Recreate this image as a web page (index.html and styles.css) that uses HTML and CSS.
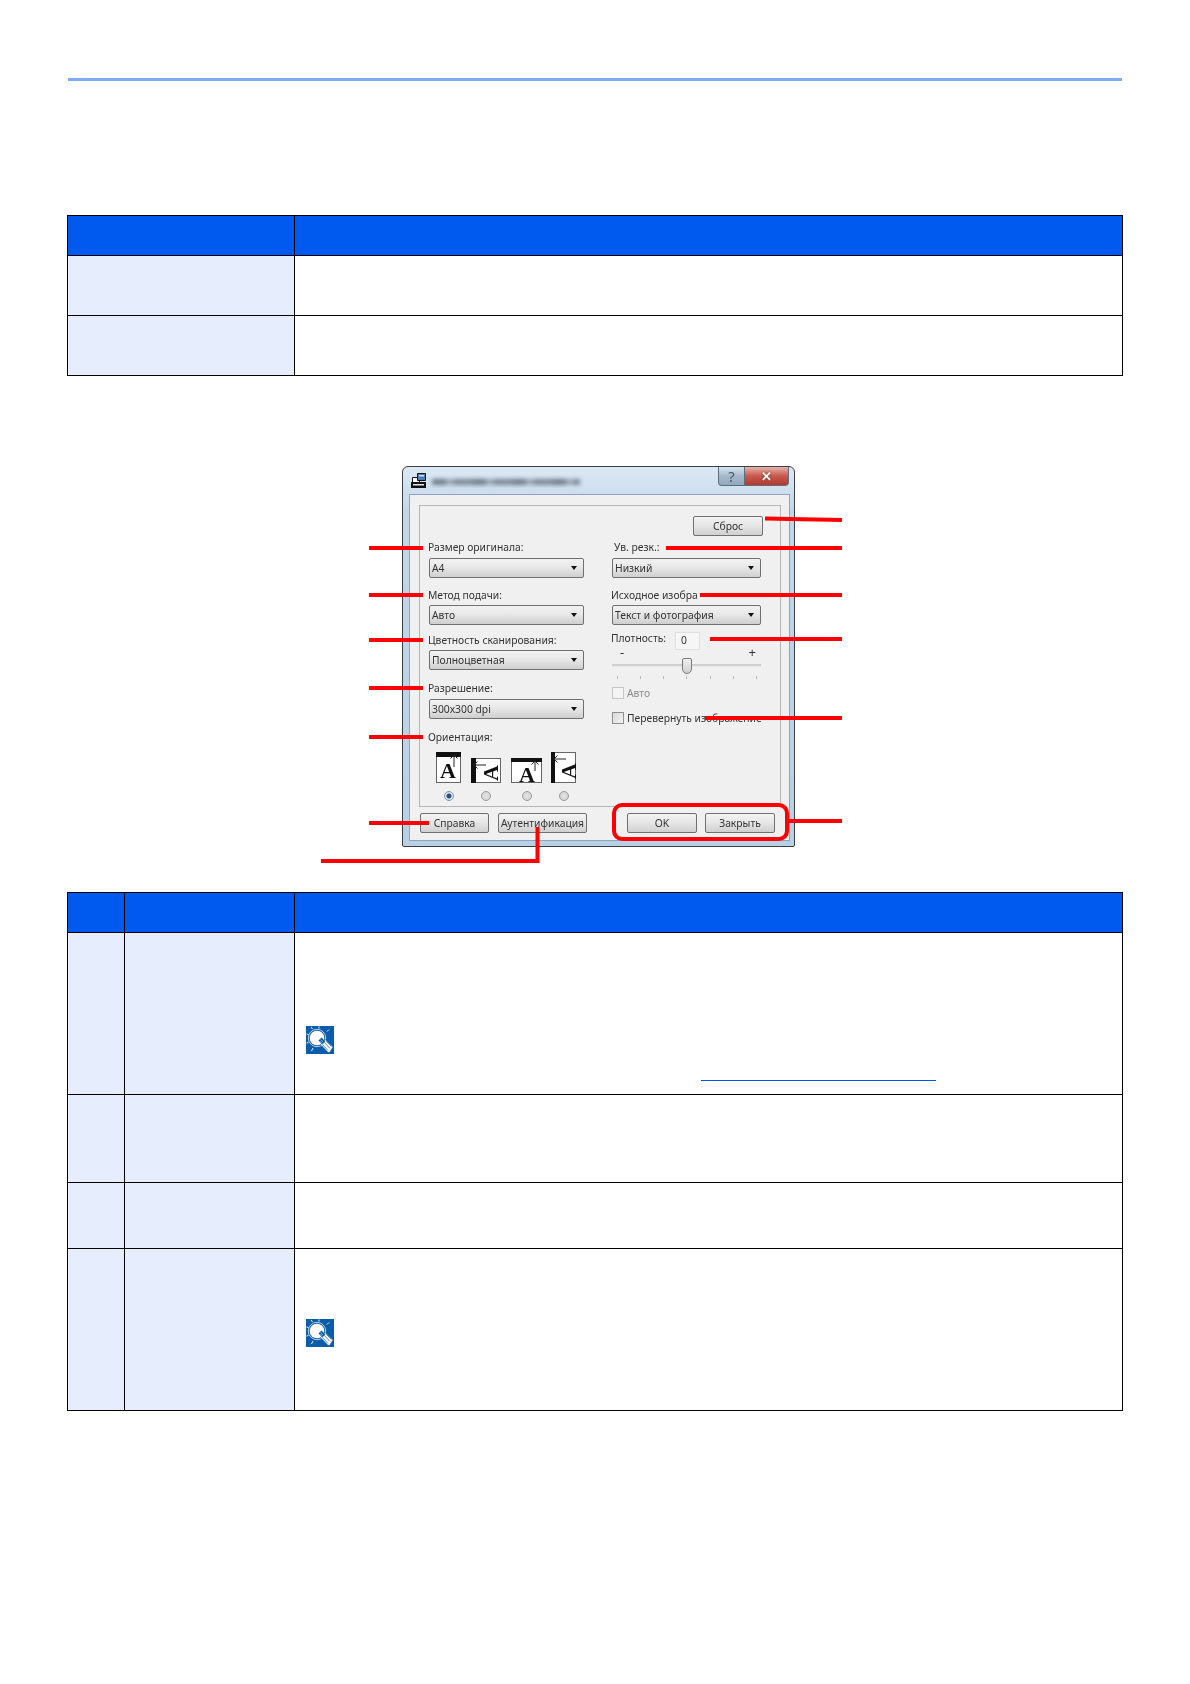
FILE: index.html
```html
<!DOCTYPE html>
<html lang="ru">
<head>
<meta charset="utf-8">
<title>Настройки сканирования</title>
<link rel="stylesheet" href="styles.css">
</head>
<body>
<div class="page">
  <div class="rule"></div>

  <table class="tbl tbl-a">
    <colgroup><col class="c-name"><col></colgroup>
    <tr class="r40"><th></th><th></th></tr>
    <tr class="r60"><td class="lab"></td><td></td></tr>
    <tr class="r60"><td class="lab"></td><td></td></tr>
  </table>

  <div class="figure">
    <div class="dialog">
      <div class="titlebar">
        <svg class="appicon" viewBox="0 0 15 15" width="15" height="15">
          <rect x="0" y="9" width="15" height="6" fill="#111"/>
          <rect x="2" y="11" width="11" height="1.500" fill="#e8e8e8"/>
          <path d="M1.500 4.500h7v5h-7z" fill="#fff" stroke="#111"/>
          <path d="M6.500.5h8v7h-8z" fill="#4a7fb5" stroke="#111"/>
          <path d="M8 2h5v1.500H8z" fill="#cfe2f3"/>
        </svg>
        <div class="blurtitle"></div>
        <div class="winbtns">
          <div class="winbtn help">?</div>
          <div class="winbtn close">✕</div>
        </div>
      </div>
      <div class="panel">
        <div class="group">
          <div class="resetrow"><div class="btn reset">Сброс</div></div>
          <div class="cols">
            <div class="col left">
              <div class="field"><div class="lbl">Размер оригинала:</div><div class="sel">A4</div></div>
              <div class="field"><div class="lbl">Метод подачи:</div><div class="sel">Авто</div></div>
              <div class="field"><div class="lbl">Цветность сканирования:</div><div class="sel">Полноцветная</div></div>
              <div class="field"><div class="lbl">Разрешение:</div><div class="sel">300x300 dpi</div></div>
              <div class="field"><div class="lbl">Ориентация:</div></div>
              <div class="orient">
                <svg class="o1" width="25" height="31" viewBox="0 0 25 31">
                  <rect x=".5" y=".5" width="24" height="30" fill="#fff" stroke="#666"/>
                  <rect width="25" height="5" fill="#111"/>
                  <text x="12" y="26" text-anchor="middle" class="glyph">A</text>
                  <path d="M18 15V3M14.500 6.500 18 3l3.500 3.500" fill="none" stroke="#222" stroke-width="1"/>
                </svg>
                <svg class="o2" width="30" height="25" viewBox="0 0 30 25">
                  <rect x=".5" y=".5" width="29" height="24" fill="#fff" stroke="#666"/>
                  <rect width="5" height="25" fill="#111"/>
                  <text x="0" y="0" text-anchor="middle" class="glyph" transform="translate(27 15) rotate(-90)">A</text>
                  <path d="M15 7H3M6.500 3.500 3 7l3.500 3.500" fill="none" stroke="#222" stroke-width="1"/>
                </svg>
                <svg class="o3" width="31" height="25" viewBox="0 0 31 25">
                  <rect x=".5" y=".5" width="30" height="24" fill="#fff" stroke="#666"/>
                  <rect width="31" height="4" fill="#111"/>
                  <text x="16" y="24" text-anchor="middle" class="glyph">A</text>
                  <path d="M24 13V3M20.500 6.500 24 3l3.500 3.500" fill="none" stroke="#222" stroke-width="1"/>
                </svg>
                <svg class="o4" width="25" height="31" viewBox="0 0 25 31">
                  <rect x=".5" y=".5" width="24" height="30" fill="#fff" stroke="#666"/>
                  <rect width="4" height="31" fill="#111"/>
                  <text x="0" y="0" text-anchor="middle" class="glyph" transform="translate(25 19) rotate(-90)">A</text>
                  <path d="M15 7H3M6.500 3.500 3 7l3.500 3.500" fill="none" stroke="#222" stroke-width="1"/>
                </svg>
              </div>
              <div class="radios">
                <span class="radio on"></span><span class="radio"></span><span class="radio"></span><span class="radio"></span>
              </div>
            </div>
            <div class="col right">
              <div class="field"><div class="lbl">Ув. резк.:</div><div class="sel">Низкий</div></div>
              <div class="field"><div class="lbl">Исходное изобра</div><div class="sel">Текст и фотография</div></div>
              <div class="density">
                <div class="lbl">Плотность:</div>
                <div class="numbox">0</div>
              </div>
              <div class="signs"><span>-</span><span>+</span></div>
              <div class="slider"><div class="thumb"></div></div>
              <div class="ticks"><i></i><i></i><i></i><i></i><i></i><i></i><i></i></div>
              <div class="check dis"><span class="box"></span>Авто</div>
              <div class="check"><span class="box"></span>Перевернуть изображение</div>
            </div>
          </div>
        </div>
        <div class="footer">
          <div class="btn help-b">Справка</div>
          <div class="btn auth">Аутентификация</div>
          <div class="btn ok">OK</div>
          <div class="btn closeb">Закрыть</div>
        </div>
      </div>
    </div>
  </div>

  <table class="tbl tbl-b">
    <colgroup><col class="c-no"><col class="c-item"><col></colgroup>
    <tr class="r40"><th></th><th></th><th></th></tr>
    <tr class="r162">
      <td class="lab"></td><td class="lab"></td>
      <td class="notecell">
        <svg class="tip" viewBox="0 0 28 28" width="28" height="28"><use href="#bulb"/></svg>
        <div class="linkline"></div>
      </td>
    </tr>
    <tr class="r88"><td class="lab"></td><td class="lab"></td><td></td></tr>
    <tr class="r66"><td class="lab"></td><td class="lab"></td><td></td></tr>
    <tr class="r162">
      <td class="lab"></td><td class="lab"></td>
      <td class="notecell note-high">
        <svg class="tip" viewBox="0 0 28 28" width="28" height="28"><use href="#bulb"/></svg>
      </td>
    </tr>
  </table>

  <svg class="defs" width="0" height="0">
    <symbol id="bulb" viewBox="0 0 28 28">
      <rect width="28" height="28" fill="#0b5dab"/>
      <circle cx="11" cy="12" r="8.700" fill="none" stroke="#e6eff8" stroke-width=".8"/>
      <circle cx="11" cy="12" r="7.300" fill="#fff"/>
      <path d="M14.500 18.500l4.500-5 8 7.500-3.500 5.500-1.500-.2z" fill="#fff" stroke="#0b5dab" stroke-width=".5"/>
      <path d="M16.500 18.500l5.500 6M18.500 16.500l5.500 6M20.500 15.500l5 5" stroke="#0b5dab" stroke-width=".7"/>
      <path d="M12.500 14.500l3-3 3.800 4-3 3z" fill="#0b5dab"/>
      <path d="M14.500 13.500l2.500 2.500M13.700 15l2.500 2.500" stroke="#a9c8e6" stroke-width=".7"/>
      <path d="M5 1l1.500 2M13 0.500v2M23 3.500l-2 2M0.500 8l2 .5M0.500 17l2-.5M5.500 25l1.500-3" stroke="#fff" stroke-width=".9"/>
    </symbol>
  </svg>

  <svg class="marks" width="1190" height="1684" viewBox="0 0 1190 1684">
    <g fill="none" stroke="#f00" stroke-width="4">
      <path d="M369 548H423M369 595H423M369 640H423M369 688H423M369 737H423M369 823H429"/>
      <path d="M321 861H537.500V827"/>
      <path d="M765 518.500L842 520M666 548H842M700 595H842M710 639H842M705 718H842M789 821H842"/>
      <rect x="614" y="805" width="173" height="34" rx="8"/>
    </g>
  </svg>
</div>
</body>
</html>
```
FILE: styles.css
```css
* { box-sizing: border-box; }
html, body { margin: 0; padding: 0; background: #fff; }
body { font-family: "Noto Sans", "Liberation Sans", sans-serif; color: #222; }

.page { position: relative; width: 1190px; height: 1684px; padding: 78px 67px 0; overflow: hidden; }
.rule { height: 3px; margin: 0 1px 134px; background: #7fabf5; }

.tbl { width: 1056px; border-collapse: collapse; table-layout: fixed; }
.tbl th, .tbl td { border: 1px solid #000; padding: 0; }
.tbl th { background: #005af0; }
.lab { background: #e6edfc; }
.c-name { width: 227px; }
.c-no { width: 57px; }
.c-item { width: 170px; }
.r40 { height: 40px; }
.r60 { height: 60px; }
.r162 { height: 162px; }
.r88 { height: 88px; }
.r66 { height: 66px; }

.tbl .notecell { vertical-align: top; padding: 93px 0 0 11px; }
.tbl .note-high { padding-top: 70px; }
.tip { display: block; }
.linkline { height: 1px; width: 235px; margin: 26px 0 0 395px; background: #0055f0; }

.figure { height: 516px; padding: 90px 0 0 335px; }

.dialog {
  width: 393px; height: 381px;
  padding: 0 4px 6px 6px;
  border: 1px solid #3a3f44;
  border-radius: 6px 6px 2px 2px;
  background: linear-gradient(#dce9f4, #c1d7e9 12%, #b8d0e6);
  font-size: 10.300px;
  color: #333;
  filter: blur(.3px);
}
.titlebar { display: flex; height: 27px; align-items: flex-start; }
.appicon { margin: 6px 0 0 2px; flex: none; }
.blurtitle {
  width: 148px; height: 6px; margin: 12px 0 0 6px;
  background: repeating-linear-gradient(90deg, #6f7c89 0 14px, #98a5b2 14px 22px, #7c8996 22px 40px);
  filter: blur(2px);
}
.winbtns { display: flex; margin: 0 1px 0 auto; }
.winbtn {
  height: 19px; display: flex; align-items: center; justify-content: center;
  border: 1px solid #5f6d7c; border-top: 0;
  font-weight: bold;
}
.winbtn.help {
  width: 27px; border-radius: 0 0 0 4px;
  background: linear-gradient(#d9e6f1, #a5b9cb 50%, #92a8bc);
  color: #4a5866; font-size: 15px; font-weight: normal;
}
.winbtn.close {
  width: 44px; border-left: 0; border-radius: 0 0 4px 0;
  background: linear-gradient(#e6b4ac, #c9594e 50%, #b23a2f);
  color: #fff; font-size: 13px; text-shadow: 0 0 2px #5a1a14;
}

.panel { height: 347px; padding: 10px 8px 0 9px; background: #f0f0f0; border: 1px solid #8ea6bd; }
.group { height: 302px; border: 1px solid #b6b6b6; }
.resetrow { display: flex; justify-content: flex-end; padding: 10px 17px 0 0; }
.btn {
  height: 20px; display: flex; align-items: center; justify-content: center; padding-bottom: 1px;
  border: 1px solid #707070; border-radius: 2px;
  background: linear-gradient(#f3f3f3, #e6e6e6 48%, #d0d0d0);
  font-size: 10.300px; color: #333;
}
.reset { width: 70px; }

.cols { display: flex; padding-top: 4px; }
.col.left { width: 155px; margin: 0 28px 0 9px; }
.col.right { width: 149px; }

.lbl { height: 14px; line-height: 14px; margin-left: -1px; white-space: nowrap; }
.field + .field { margin-top: 10px; }
.field .lbl + .sel { margin-top: 4px; }
.field:nth-child(2) .sel, .field:nth-child(3) .sel { margin-top: 3px; }
.field:nth-child(3) { margin-top: 8px; }
.field:nth-child(n+4) { margin-top: 11px; }
.right .lbl { margin-left: 2px; }
.right .field:nth-child(2) .lbl { margin-left: -1px; }

.sel {
  position: relative; height: 20px; line-height: 18px; padding-left: 2px;
  border: 1px solid #707070; border-radius: 2px;
  background: linear-gradient(#f2f2f2, #e8e8e8 45%, #cfcfcf);
  white-space: nowrap;
}
.sel::after {
  content: ""; position: absolute; right: 6px; top: 7px;
  border: 3px solid transparent; border-top: 4px solid #111; border-bottom: 0;
}

.orient { display: flex; align-items: flex-end; height: 31px; margin-top: 8px; padding-left: 7px; }
.orient svg { flex: none; overflow: visible; }
.o2 { margin-left: 10px; }
.o3 { margin-left: 10px; }
.o4 { margin-left: 9px; }
.glyph { font-family: "Liberation Serif", serif; font-weight: bold; font-size: 22px; fill: #111; }

.radios { display: flex; margin-top: 8px; padding-left: 15px; }
.radio {
  flex: none; width: 10px; height: 10px; margin-right: 27px; border-radius: 50%;
  border: 1px solid #9a9a9a;
  background: radial-gradient(#e4e4e4, #cfcfcf);
}
.radio:nth-child(2) { margin-right: 31px; }
.radio.on {
  border-color: #7f95ad;
  background: radial-gradient(#2b4f78 0 2px, #dfe8f1 3px);
}

.density { display: flex; margin-top: 7px; height: 18px; }
.density .lbl { width: 64px; margin-left: -1px; margin-top: -1px; }
.numbox { width: 25px; height: 18px; padding: 0 0 0 5px; line-height: 14px; background: #f6f6f6; border: 1px solid #e0e0e0; }
.signs { display: flex; justify-content: space-between; height: 10px; line-height: 10px; padding: 0 5px 0 8px; font-size: 13px; margin-top: -3px; }
.slider { position: relative; height: 2px; margin-top: 7px; background: #cfcfcf; border-bottom: 1px solid #e9e9e9; box-sizing: content-box; }
.thumb {
  position: absolute; left: 70px; top: -6px; width: 10px; height: 16px;
  border: 1px solid #7a7a7a; border-radius: 2px 2px 5px 5px;
  background: linear-gradient(#f0f0f0, #cfcfcf);
}
.ticks { display: flex; justify-content: space-between; height: 3px; margin-top: 9px; padding: 0 4px 0 5px; }
.ticks i { display: block; width: 1px; height: 3px; background: #bbb; }

.check { display: flex; align-items: center; height: 12px; margin-top: 8px; white-space: nowrap; }
.check + .check { margin-top: 13px; }
.check .box { flex: none; width: 12px; height: 12px; margin-right: 3px; border: 1px solid #8e8f8f; background: linear-gradient(135deg, #d8d8d8, #f4f4f4); }
.check.dis { color: #8b8b8b; }
.check.dis .box { border-color: #c6c6c6; background: #f4f4f4; }

.footer { display: flex; padding: 6px 0 0 1px; }
.help-b { width: 69px; }
.auth { width: 89px; margin-left: 9px; }
.ok { width: 70px; margin-left: 40px; }
.closeb { width: 70px; margin-left: 8px; }

.defs { position: absolute; }
.marks { position: absolute; left: 0; top: 0; pointer-events: none; }
```
